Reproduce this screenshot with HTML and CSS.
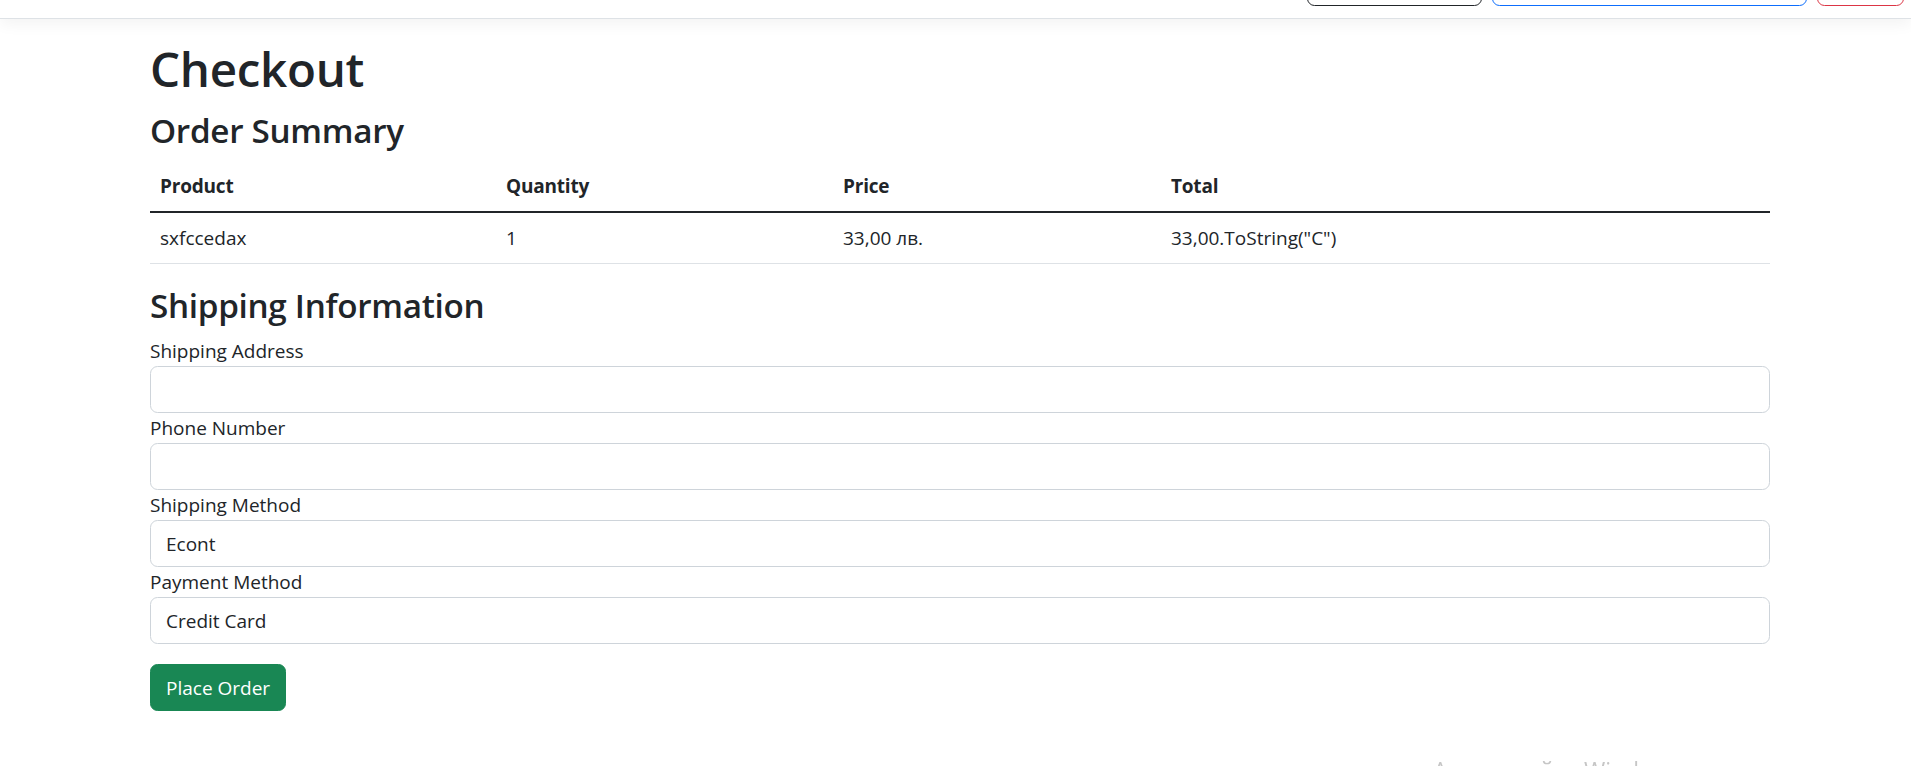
FILE: index.html
```html
<!DOCTYPE html>
<html lang="en">
<head>
<meta charset="utf-8">
<title>Checkout</title>
<link rel="stylesheet" href="styles.css">
</head>
<body>
<header class="topbar">
  <div class="topbar-actions">
    <span class="nav-btn nav-btn-dark"></span>
    <span class="nav-btn nav-btn-primary"></span>
    <span class="nav-btn nav-btn-danger"></span>
  </div>
</header>
<main class="container">
  <h1 class="page-title">Checkout</h1>
  <h3 class="section-title">Order Summary</h3>
  <table class="summary">
    <colgroup>
      <col class="col-product">
      <col class="col-qty">
      <col class="col-price">
      <col class="col-total">
    </colgroup>
    <thead>
      <tr><th>Product</th><th>Quantity</th><th>Price</th><th>Total</th></tr>
    </thead>
    <tbody>
      <tr><td>sxfccedax</td><td>1</td><td>33,00 лв.</td><td>33,00.ToString("C")</td></tr>
    </tbody>
  </table>
  <h3 class="section-title">Shipping Information</h3>
  <form class="checkout-form">
    <div class="field">
      <label class="field-label" for="addr">Shipping Address</label>
      <input class="control" id="addr" type="text">
    </div>
    <div class="field">
      <label class="field-label" for="phone">Phone Number</label>
      <input class="control" id="phone" type="text">
    </div>
    <div class="field">
      <label class="field-label" for="ship">Shipping Method</label>
      <select class="control" id="ship"><option>Econt</option></select>
    </div>
    <div class="field">
      <label class="field-label" for="pay">Payment Method</label>
      <select class="control" id="pay"><option>Credit Card</option></select>
    </div>
    <button class="btn-success" type="button">Place Order</button>
  </form>
</main>
<div class="watermark">Активирайте Windows</div>
</body>
</html>
```

FILE: styles.css
```css
html, body {
  margin: 0;
  padding: 0;
  background: #fff;
}

body {
  font-family: "Open Sans", "Noto Sans", sans-serif;
  font-size: 19px;
  line-height: 30px;
  color: #212529;
}

.topbar {
  height: 6px;
  padding: 0 7px 12px 0;
  display: flex;
  justify-content: flex-end;
  align-items: flex-end;
  overflow: hidden;
  background: #fff;
  border-bottom: 1px solid #dee2e6;
  box-shadow: 0 5px 15px rgba(0, 0, 0, 0.05);
  position: relative;
}

.topbar-actions {
  display: flex;
  gap: 10px;
  align-items: flex-end;
}

.nav-btn {
  display: block;
  height: 47.5px;
  box-sizing: border-box;
  border-radius: 7.5px;
  border: 1.25px solid #212529;
}

.nav-btn-dark {
  width: 175px;
  border-color: #212529;
}

.nav-btn-primary {
  width: 315px;
  border-color: #0d6efd;
}

.nav-btn-danger {
  width: 87px;
  border-color: #dc3545;
}

.container {
  margin: 20px 0 0 150px;
  width: 1620px;
}

.page-title {
  margin: 0 0 10px;
  font-size: 47.5px;
  line-height: 60px;
  font-weight: 600;
  letter-spacing: -0.3px;
}

.section-title {
  margin: 0 0 10px;
  font-size: 33.25px;
  line-height: 42px;
  font-weight: 600;
  letter-spacing: -0.3px;
}

.summary {
  width: 100%;
  border-collapse: collapse;
  margin-bottom: 20px;
}

.col-product { width: 346px; }
.col-qty { width: 337px; }
.col-price { width: 328px; }

.summary th,
.summary td {
  padding: 10px;
  text-align: left;
  vertical-align: top;
  line-height: 30px;
}

.summary th {
  font-weight: 700;
  letter-spacing: -0.2px;
  border-bottom: 2px solid #212529;
}

.summary td {
  font-weight: 400;
  border-bottom: 1px solid #dee2e6;
}

.field-label {
  display: block;
  line-height: 30px;
}

.control {
  display: block;
  width: 100%;
  box-sizing: border-box;
  height: 47px;
  padding: 7.5px 15px;
  border: 1.25px solid #ced4da;
  border-radius: 7.5px;
  background: #fff;
  font-family: inherit;
  font-size: 19px;
  line-height: 30px;
  color: #212529;
  appearance: none;
  -webkit-appearance: none;
  margin: 0;
}

.btn-success {
  margin-top: 20px;
  height: 47px;
  padding: 7px 15px;
  box-sizing: border-box;
  background: #198754;
  border: 1.25px solid #198754;
  border-radius: 7.5px;
  color: #fff;
  font-family: inherit;
  font-size: 19px;
  line-height: 30px;
}

.watermark {
  position: fixed;
  left: 1433px;
  top: 759px;
  font-size: 23px;
  line-height: 23px;
  color: #c6c6c6;
  white-space: nowrap;
}
```
